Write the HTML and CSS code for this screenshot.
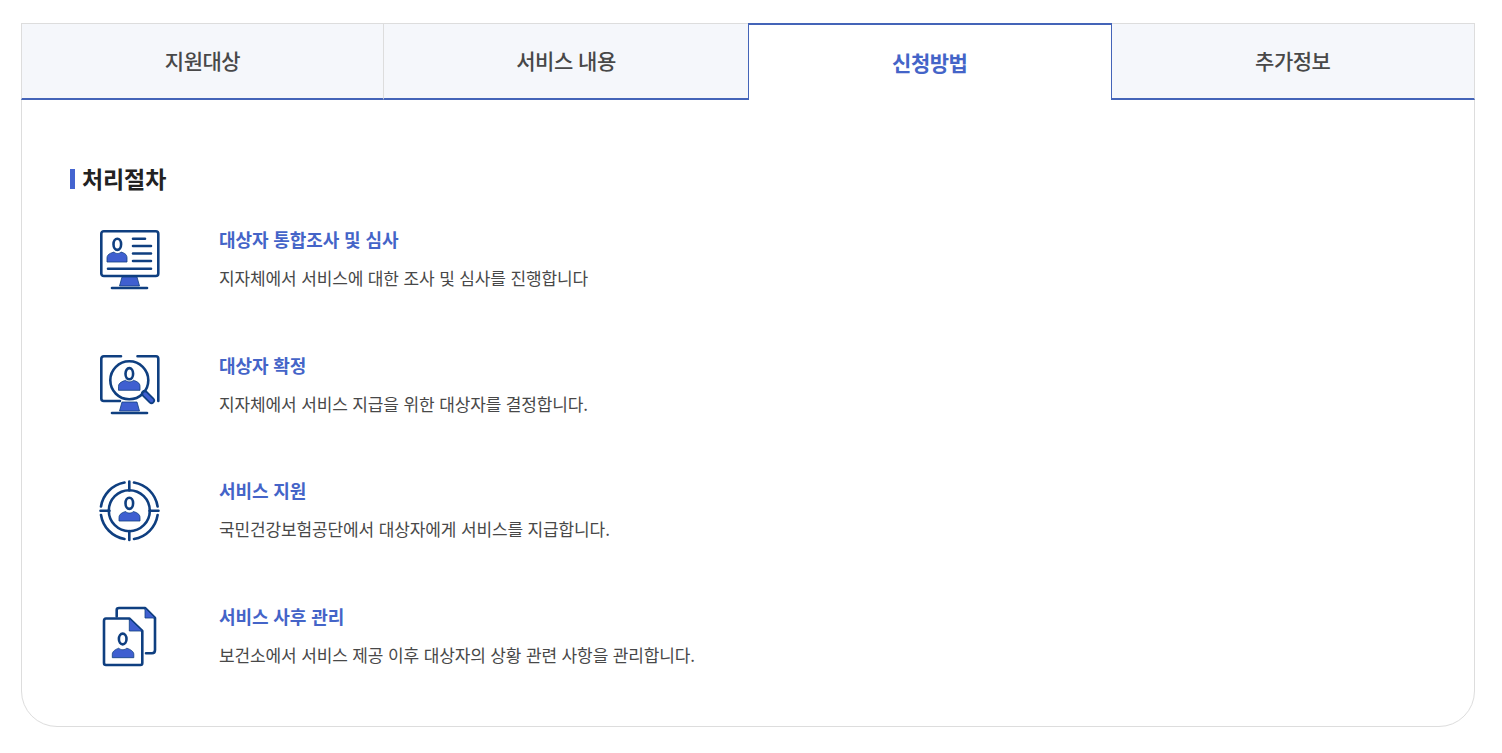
FILE: index.html
```html
<!DOCTYPE html>
<html lang="ko">
<head>
    <meta charset="UTF-8">
    <meta name="viewport" content="width=device-width, initial-scale=1.0">
    <title>서비스 안내</title>
    <link rel="stylesheet" href="styles.css">
</head>
<body>

    <div class="container">
        <ul class="tabs">
            <li class="tab">지원대상</li>
            <li class="tab before-active">서비스 내용</li>
            <li class="tab active">신청방법</li>
            <li class="tab">추가정보</li>
        </ul>

        <div class="content">
            <h2 class="section-title">처리절차</h2>

            <div class="step">
                <svg class="step-icon" viewBox="0 0 60 60">
                    <rect class="line" x="1.300" y="1.300" width="57" height="44.700" rx="2.500"/>
                    <ellipse class="line" cx="17.300" cy="14.300" rx="3.800" ry="5.600"/>
                    <path class="fill" d="M7 32v-4c0-4 4-5 7-6 2 2 5 2 7 0 3 1 6 2 6 6v4z"/>
                    <path class="line" d="M33 8.700h12M33 16h18M33 23.500h18M33 31h18M8 38.700h43"/>
                    <path class="fill" d="M22 47h15l2.500 9h-20z"/>
                    <path class="line" d="M12 58h35"/>
                </svg>
                <div class="step-text">
                    <h3 class="step-title">대상자 통합조사 및 심사</h3>
                    <p class="step-desc">지자체에서 서비스에 대한 조사 및 심사를 진행합니다</p>
                </div>
            </div>

            <div class="step">
                <svg class="step-icon" viewBox="0 0 60 60">
                    <path class="line" d="M21 1.300H3.800C2.300 1.300 1.300 2.300 1.300 3.800V43.500C1.300 45 2.300 46 3.800 46H20M37.500 1.300H56C57.500 1.300 58.300 2.300 58.300 3.800V46"/>
                    <circle class="line" cx="29.300" cy="25.300" r="19"/>
                    <ellipse class="line" cx="29.300" cy="18.700" rx="3.800" ry="5.600"/>
                    <path class="fill" d="M18.500 35.300v-4c0-3.500 4-5 7-6 2 2 6 2 8 0 3 1 6.500 2.500 6.500 6v4z"/>
                    <path class="handle-edge" d="M44.500 38.500l7 7"/>
                    <path class="handle" d="M45 39l6.500 6.500"/>
                    <path class="fill" d="M22 47h15l2.500 9h-20z"/>
                    <path class="line" d="M12 58h35"/>
                </svg>
                <div class="step-text">
                    <h3 class="step-title">대상자 확정</h3>
                    <p class="step-desc">지자체에서 서비스 지급을 위한 대상자를 결정합니다.</p>
                </div>
            </div>

            <div class="step">
                <svg class="step-icon" viewBox="0 0 60 60">
                    <circle class="line" cx="29.300" cy="29.700" r="20.500"/>
                    <path class="line" d="M24.500 1.500A28.800 28.800 0 0 0 1 25.500M34 1.500A28.800 28.800 0 0 1 57.600 25.500M1 34A28.800 28.800 0 0 0 24.500 58M57.600 34A28.800 28.800 0 0 1 34 58"/>
                    <path class="line" d="M29.300 0.500v9M29.300 50v9M0.500 29.700h9M49.500 29.700h9"/>
                    <ellipse class="line" cx="29.300" cy="22.300" rx="3.800" ry="5.600"/>
                    <path class="fill" d="M19 40v-3.500c0-3.500 3.500-5 6.500-6 2 2 6 2 8 0 3 1 6.500 2.500 6.500 6v3.500z"/>
                </svg>
                <div class="step-text">
                    <h3 class="step-title">서비스 지원</h3>
                    <p class="step-desc">국민건강보험공단에서 대상자에게 서비스를 지급합니다.</p>
                </div>
            </div>

            <div class="step">
                <svg class="step-icon" viewBox="0 0 60 60">
                    <path class="line" d="M16.700 9.500V3C16.700 1.500 17.500 1 19 1H45L55 11V43C55 45.500 54 46.300 52 46.300H46"/>
                    <path class="fill" d="M45 1V11H55z"/>
                    <path class="line" d="M29.300 11.500H6C4.500 11.500 4 12.500 4 14V56C4 57.500 4.500 58 6 58H40.500C42 58 42.300 57.500 42.300 56V24z"/>
                    <path class="fill" d="M29.300 11.500V24H42.300z"/>
                    <ellipse class="line" cx="22.700" cy="32" rx="3.800" ry="5.400"/>
                    <path class="fill" d="M12.300 50.700v-3.500c0-3 3.500-5 6.500-6 2 2 6 2 8 0 3 1 7 3 7 6v3.500z"/>
                </svg>
                <div class="step-text">
                    <h3 class="step-title">서비스 사후 관리</h3>
                    <p class="step-desc">보건소에서 서비스 제공 이후 대상자의 상황 관련 사항을 관리합니다.</p>
                </div>
            </div>
        </div>
    </div>

</body>
</html>
```

FILE: styles.css
```css
body {
    font-family: "Noto Sans CJK KR", "Noto Sans", sans-serif;
    background-color: #ffffff;
    margin: 0;
    padding: 23px 27px 26px 21px;
}
h2, h3, p, ul {
    margin: 0;
    padding: 0;
}
.container {
    border: 1px solid #dddddd;
    border-radius: 0 0 36px 36px;
    height: 704px;
    box-sizing: border-box;
}
.tabs {
    display: grid;
    grid-template-columns: 363px 364px 1fr 1fr;
    list-style: none;
    margin: -1px -1px 0;
}
.tab {
    height: 77px;
    box-sizing: border-box;
    display: flex;
    align-items: center;
    justify-content: center;
    padding-bottom: 2px;
    background-color: #f5f7fb;
    border-top: 1px solid #dddddd;
    border-right: 1px solid #dddddd;
    border-bottom: 2px solid #4464b8;
    font-size: 21px;
    font-weight: 500;
    letter-spacing: -0.5px;
    color: #484848;
}
.tab:first-child {
    border-left: 1px solid #dddddd;
}
.tab.before-active {
    border-right: none;
}
.tab.active {
    background-color: #ffffff;
    border: 1px solid #4464b8;
    border-top-width: 2px;
    border-bottom: none;
    font-weight: 700;
    color: #4464c8;
}
.content {
    padding: 63px 48px 0;
}
.section-title {
    display: flex;
    align-items: flex-start;
    gap: 7px;
    height: 32px;
    font-size: 23px;
    font-weight: 700;
    letter-spacing: -0.1px;
    line-height: 30px;
    color: #222222;
}
.section-title::before {
    content: "";
    width: 5px;
    height: 20px;
    margin-top: 6px;
    background-color: #4464d0;
}
.step {
    display: flex;
    gap: 59px;
    height: 125.7px;
    padding-left: 30px;
    box-sizing: border-box;
}
.section-title + .step {
    margin-top: 30px;
}
.step-icon {
    width: 60px;
    height: 60px;
    margin-top: 4.5px;
    flex-shrink: 0;
    overflow: visible;
    filter: blur(0.3px);
}
.step-icon .line {
    fill: none;
    stroke: #0f3f80;
    stroke-width: 2.600;
    stroke-linecap: round;
    stroke-linejoin: round;
}
.step-icon .fill {
    fill: #3f5fd0;
    stroke: #0f3f80;
    stroke-width: 0.800;
}
.step-icon .handle-edge {
    fill: none;
    stroke: #0f3f80;
    stroke-width: 7;
    stroke-linecap: round;
}
.step-icon .handle {
    fill: none;
    stroke: #3f5fd0;
    stroke-width: 3.500;
    stroke-linecap: round;
}
.step-text {
    padding-top: 1px;
}
.step-title {
    font-size: 18px;
    font-weight: 700;
    line-height: 26px;
    letter-spacing: -0.1px;
    color: #4464c8;
}
.step-desc {
    margin-top: 13px;
    font-size: 17px;
    line-height: 26px;
    letter-spacing: -0.13px;
    color: #484848;
}
```
